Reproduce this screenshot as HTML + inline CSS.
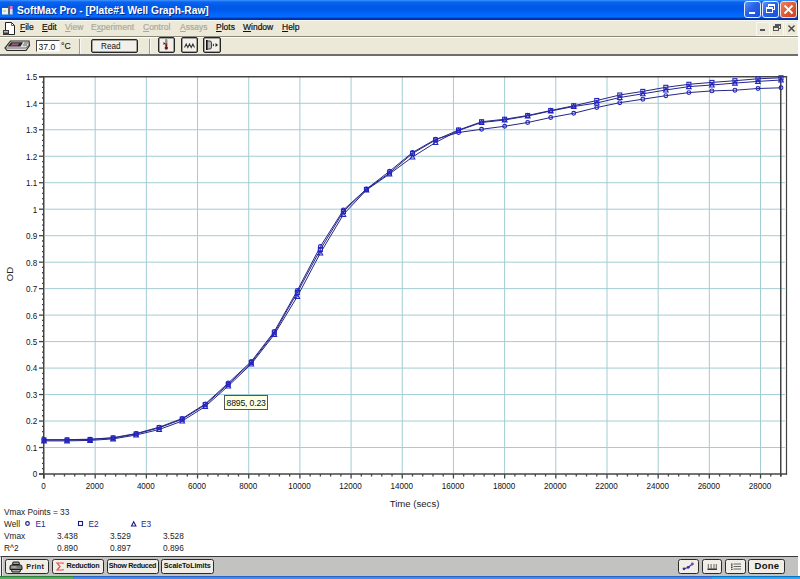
<!DOCTYPE html>
<html><head><meta charset="utf-8">
<style>
*{margin:0;padding:0;box-sizing:border-box}
html,body{width:800px;height:579px;overflow:hidden;background:#fff;font-family:"Liberation Sans",sans-serif}
.abs{position:absolute}
#title{left:0;top:0;width:798px;height:20px;background:linear-gradient(#3d95ff 0px,#0a64f0 2px,#005ae8 6px,#0058e6 9px,#0064fa 13px,#0a6aff 17px,#0040c0 18px,#0030a0 19px,#0030a0 20px)}
#title .t{left:17px;top:4.5px;font-weight:bold;font-size:10.2px;color:#fff;text-shadow:1px 1px 0 #0a2a8a;white-space:nowrap;letter-spacing:0}
#menu{left:0;top:20px;width:798px;height:17px;background:#ece9d8;border-top:1px solid #fafaf4;border-bottom:1px solid #8a887a}
#menu span{position:absolute;top:1px;font-size:8.5px;color:#111;white-space:nowrap;text-underline-offset:0.5px;-webkit-text-stroke:0.2px #111}
#menu span.d{-webkit-text-stroke:0.2px #aca899}
#menu span.d{color:#aca899}
#tool{left:0;top:37px;width:798px;height:19px;background:#ece9d8;border-top:1px solid #fff;border-bottom:2px solid #6e6e6a}
.btn{position:absolute;border:1px solid #262626;border-radius:2px;background:#f2f0e8;box-shadow:inset 0 0 0 0.5px #555}
#bottom{left:0;top:556px;width:798px;height:20px;background:#c2c2c0;border-top:1px solid #3a3a3a;border-left:1px solid #f0f0f0}
#bottom .b{position:absolute;top:2px;height:15px;border:1.5px solid #2a2a2a;border-radius:2.5px;background:#f0eee6;font-weight:bold;font-size:6.8px;color:#111;white-space:nowrap}
#task{left:0;top:576px;width:800px;height:3px;background:linear-gradient(#2a60c0 0,#2a60c0 1px,#3c8ce8 1px)}
.leg{position:absolute;font-size:8.3px;color:#222;white-space:nowrap}
</style></head>
<body>
<div id="title" class="abs">
  <svg class="abs" style="left:0;top:0" width="16" height="20">
    <rect x="2" y="8" width="6.5" height="6.5" fill="#eef4f0"/>
    <rect x="3" y="10" width="3" height="2" fill="#c8dcb0"/>
    <rect x="8" y="5.5" width="1.7" height="9" fill="#56666c"/>
    <rect x="10" y="6" width="2.6" height="3" fill="#e868c8"/>
    <rect x="10" y="9" width="2.6" height="5.5" fill="#d4dce4"/>
  </svg>
  <div class="abs t">SoftMax Pro - [Plate#1 Well Graph-Raw]</div>
  <div class="abs" style="left:797px;top:0;width:1px;height:20px;background:#0a28a0"></div>
  <!-- min -->
  <div class="abs" style="left:744px;top:1px;width:17px;height:17px;border:1px solid #e0ecff;border-radius:3px;background:linear-gradient(135deg,#5a90f8,#2860e8 45%,#1850d8)"></div>
  <div class="abs" style="left:748.5px;top:12px;width:6px;height:2px;background:#fff"></div>
  <!-- max -->
  <div class="abs" style="left:762px;top:1px;width:17px;height:17px;border:1px solid #e0ecff;border-radius:3px;background:linear-gradient(135deg,#5a90f8,#2860e8 45%,#1850d8)"></div>
  <div class="abs" style="left:768px;top:4px;width:7px;height:6px;border:1px solid #fff;border-top-width:2px"></div>
  <div class="abs" style="left:766px;top:7px;width:7px;height:6px;border:1px solid #fff;border-top-width:2px;background:#2458d8"></div>
  <!-- close -->
  <div class="abs" style="left:780px;top:1px;width:17px;height:17px;border:1px solid #f0e0e0;border-radius:3px;background:linear-gradient(135deg,#f08060,#e05a34 50%,#c84424)"></div>
  <svg class="abs" style="left:780px;top:1px" width="17" height="17"><path d="M4.5,4.5 L12.5,12.5 M12.5,4.5 L4.5,12.5" stroke="#fff" stroke-width="1.8"/></svg>
</div>

<div id="menu" class="abs">
  <svg class="abs" style="left:2px;top:0px" width="14" height="16" viewBox="0 0 14 16">
    <path d="M3.5,1.5 L9.5,1.5 L12.5,4.5 L12.5,13.5 L3.5,13.5 Z" fill="#fff" stroke="#222" stroke-width="1"/>
    <path d="M9.5,1.5 L9.5,4.5 L12.5,4.5" fill="none" stroke="#444" stroke-width="0.8"/>
    <rect x="1" y="9" width="6" height="5" fill="#3a3a3a"/>
    <rect x="2" y="10" width="4" height="1.5" fill="#bbb"/>
  </svg>
  <span style="left:20px"><u>F</u>ile</span>
  <span style="left:42px"><u>E</u>dit</span>
  <span class="d" style="left:65px"><u>V</u>iew</span>
  <span class="d" style="left:91px">E<u>x</u>periment</span>
  <span class="d" style="left:143px"><u>C</u>ontrol</span>
  <span class="d" style="left:180px"><u>A</u>ssays</span>
  <span style="left:216px"><u>P</u>lots</span>
  <span style="left:243px"><u>W</u>indow</span>
  <span style="left:282px"><u>H</u>elp</span>
  <div class="abs" style="left:756px;top:1px;width:14px;height:14px;border:1px solid #f8f8f2"></div><div class="abs" style="left:771px;top:1px;width:13px;height:14px;border:1px solid #f8f8f2"></div><div class="abs" style="left:785px;top:1px;width:13px;height:14px;border:1px solid #f8f8f2"></div>
  <div class="abs" style="left:760px;top:8px;width:5px;height:2px;background:#555"></div>
  <div class="abs" style="left:775px;top:3px;width:6px;height:5px;border:1px solid #555;border-top-width:2px"></div>
  <div class="abs" style="left:773px;top:5px;width:6px;height:5px;border:1px solid #555;border-top-width:2px;background:#ece9d8"></div>
  <svg class="abs" style="left:787px;top:2.7px" width="9" height="9"><path d="M1.5,1.5 L7.5,7.5 M7.5,1.5 L1.5,7.5" stroke="#444" stroke-width="1.4"/></svg>
</div>

<div id="tool" class="abs">
  <svg class="abs" style="left:4px;top:2px" width="27" height="12" viewBox="0 0 27 12">
    <path d="M6.5,1 L25,1 L25.5,5.5 L22,10.5 L3,10.5 L1,8 Z" fill="#dcdcdc" stroke="#2a2a2a" stroke-width="1.2"/>
    <path d="M1.5,8 L22,8 L25.5,4" fill="none" stroke="#555" stroke-width="0.8"/>
    <path d="M7,2.2 L19,2.2 L16.5,6.5 L3.5,6.5 Z" fill="#2a2a2a"/>
    <path d="M8.5,3.2 L15.5,3.2 L13.5,5.5 L6.5,5.5 Z" fill="#a85078"/>
    <rect x="20" y="2.5" width="4" height="1" fill="#666"/><rect x="19" y="4.5" width="4" height="1" fill="#666"/>
  </svg>
  <div class="abs" style="left:36px;top:2px;width:24px;height:12px;background:#fff;border-top:1px solid #444;border-left:1px solid #444;border-right:1px solid #f4f4f0;border-bottom:1px solid #f4f4f0"></div>
  <div class="abs" style="left:38.6px;top:4px;font-size:8.6px;color:#111">37.0</div>
  <div class="abs" style="left:61px;top:2.6px;font-size:8.6px;color:#111;-webkit-text-stroke:0.1px #111">°C</div>
  <div class="abs" style="left:79px;top:1px;width:1px;height:15px;background:#a09e8c"></div>
  <div class="abs" style="left:80px;top:1px;width:1px;height:15px;background:#f8f8f4"></div>
  <div class="btn" style="left:91px;top:1px;width:47px;height:14px"></div>
  <div class="abs" style="left:101px;top:4px;font-size:8.2px;color:#111">Read</div>
  <div class="abs" style="left:149px;top:1px;width:1px;height:15px;background:#a09e8c"></div>
  <div class="abs" style="left:150px;top:1px;width:1px;height:15px;background:#f8f8f4"></div>
  <div class="btn" style="left:158px;top:-1px;width:17px;height:16px"></div>
  <svg class="abs" style="left:158px;top:-1px" width="17" height="16"><path d="M7.6,2.5 L9,2.5 L9.2,9 L7.4,9 Z" fill="#a0a0a0" stroke="#666" stroke-width="0.5"/><circle cx="8.3" cy="11" r="1.7" fill="#701818"/><rect x="7.6" y="6.5" width="1.4" height="4" fill="#701818"/><path d="M5.5,5 L7.5,6.5 L5.5,8 Z" fill="#222"/></svg>
  <div class="btn" style="left:181px;top:-1px;width:17px;height:16px"></div>
  <svg class="abs" style="left:181px;top:-1px" width="17" height="16"><path d="M3.5,10.5 L5.2,7 L6.8,10.5 L8.5,7 L10.2,10.5 L11.9,7 L13.5,10.5" fill="none" stroke="#3a3a3a" stroke-width="1.1"/></svg>
  <div class="btn" style="left:203px;top:-1px;width:18px;height:16px"></div>
  <svg class="abs" style="left:203px;top:-1px" width="18" height="16"><rect x="3" y="3" width="1.8" height="10" fill="#111"/><path d="M4.8,4 L7,4 Q8.5,4 8.5,6 L8.5,10 Q8.5,12 7,12 L4.8,12" fill="#bbb" stroke="#333" stroke-width="0.9"/><path d="M9.5,8 L11,6.5 L11,9.5 Z M15,8 L12.5,6 L12.5,10 Z" fill="#222"/></svg>
</div>

<svg class="abs" style="left:0;top:0" width="800" height="579">
<line x1="95.18" y1="77" x2="95.18" y2="473" stroke="#a2ccd4" stroke-width="1"/>
<line x1="146.36" y1="77" x2="146.36" y2="473" stroke="#a2ccd4" stroke-width="1"/>
<line x1="197.54" y1="77" x2="197.54" y2="473" stroke="#a2ccd4" stroke-width="1"/>
<line x1="248.72" y1="77" x2="248.72" y2="473" stroke="#a2ccd4" stroke-width="1"/>
<line x1="299.90" y1="77" x2="299.90" y2="473" stroke="#a2ccd4" stroke-width="1"/>
<line x1="351.08" y1="77" x2="351.08" y2="473" stroke="#a2ccd4" stroke-width="1"/>
<line x1="402.26" y1="77" x2="402.26" y2="473" stroke="#a2ccd4" stroke-width="1"/>
<line x1="453.44" y1="77" x2="453.44" y2="473" stroke="#a2ccd4" stroke-width="1"/>
<line x1="504.62" y1="77" x2="504.62" y2="473" stroke="#a2ccd4" stroke-width="1"/>
<line x1="555.81" y1="77" x2="555.81" y2="473" stroke="#a2ccd4" stroke-width="1"/>
<line x1="606.99" y1="77" x2="606.99" y2="473" stroke="#a2ccd4" stroke-width="1"/>
<line x1="658.17" y1="77" x2="658.17" y2="473" stroke="#a2ccd4" stroke-width="1"/>
<line x1="709.35" y1="77" x2="709.35" y2="473" stroke="#a2ccd4" stroke-width="1"/>
<line x1="760.53" y1="77" x2="760.53" y2="473" stroke="#a2ccd4" stroke-width="1"/>
<line x1="45" y1="447.52" x2="785" y2="447.52" stroke="#a2ccd4" stroke-width="1"/>
<line x1="45" y1="421.04" x2="785" y2="421.04" stroke="#a2ccd4" stroke-width="1"/>
<line x1="45" y1="394.56" x2="785" y2="394.56" stroke="#a2ccd4" stroke-width="1"/>
<line x1="45" y1="368.08" x2="785" y2="368.08" stroke="#a2ccd4" stroke-width="1"/>
<line x1="45" y1="341.60" x2="785" y2="341.60" stroke="#a2ccd4" stroke-width="1"/>
<line x1="45" y1="315.12" x2="785" y2="315.12" stroke="#a2ccd4" stroke-width="1"/>
<line x1="45" y1="288.64" x2="785" y2="288.64" stroke="#a2ccd4" stroke-width="1"/>
<line x1="45" y1="262.16" x2="785" y2="262.16" stroke="#a2ccd4" stroke-width="1"/>
<line x1="45" y1="235.68" x2="785" y2="235.68" stroke="#a2ccd4" stroke-width="1"/>
<line x1="45" y1="209.20" x2="785" y2="209.20" stroke="#a2ccd4" stroke-width="1"/>
<line x1="45" y1="182.72" x2="785" y2="182.72" stroke="#a2ccd4" stroke-width="1"/>
<line x1="45" y1="156.24" x2="785" y2="156.24" stroke="#a2ccd4" stroke-width="1"/>
<line x1="45" y1="129.76" x2="785" y2="129.76" stroke="#a2ccd4" stroke-width="1"/>
<line x1="45" y1="103.28" x2="785" y2="103.28" stroke="#a2ccd4" stroke-width="1"/>
<line x1="39" y1="76.75" x2="787.1" y2="76.75" stroke="#444" stroke-width="1.5"/>
<line x1="786.5" y1="76" x2="786.5" y2="474.5" stroke="#444" stroke-width="1.2"/>
<line x1="39" y1="474" x2="787.1" y2="474" stroke="#444" stroke-width="1.5"/>
<line x1="43.75" y1="76" x2="43.75" y2="478.5" stroke="#444" stroke-width="1.5"/>
<line x1="780.75" y1="76" x2="780.75" y2="476.5" stroke="#444" stroke-width="1.5"/>
<line x1="39" y1="474.00" x2="44" y2="474.00" stroke="#444" stroke-width="1.3"/>
<line x1="42" y1="468.70" x2="44" y2="468.70" stroke="#444" stroke-width="1.3"/>
<line x1="42" y1="463.41" x2="44" y2="463.41" stroke="#444" stroke-width="1.3"/>
<line x1="42" y1="458.11" x2="44" y2="458.11" stroke="#444" stroke-width="1.3"/>
<line x1="42" y1="452.82" x2="44" y2="452.82" stroke="#444" stroke-width="1.3"/>
<line x1="39" y1="447.52" x2="44" y2="447.52" stroke="#444" stroke-width="1.3"/>
<line x1="42" y1="442.22" x2="44" y2="442.22" stroke="#444" stroke-width="1.3"/>
<line x1="42" y1="436.93" x2="44" y2="436.93" stroke="#444" stroke-width="1.3"/>
<line x1="42" y1="431.63" x2="44" y2="431.63" stroke="#444" stroke-width="1.3"/>
<line x1="42" y1="426.34" x2="44" y2="426.34" stroke="#444" stroke-width="1.3"/>
<line x1="39" y1="421.04" x2="44" y2="421.04" stroke="#444" stroke-width="1.3"/>
<line x1="42" y1="415.74" x2="44" y2="415.74" stroke="#444" stroke-width="1.3"/>
<line x1="42" y1="410.45" x2="44" y2="410.45" stroke="#444" stroke-width="1.3"/>
<line x1="42" y1="405.15" x2="44" y2="405.15" stroke="#444" stroke-width="1.3"/>
<line x1="42" y1="399.86" x2="44" y2="399.86" stroke="#444" stroke-width="1.3"/>
<line x1="39" y1="394.56" x2="44" y2="394.56" stroke="#444" stroke-width="1.3"/>
<line x1="42" y1="389.26" x2="44" y2="389.26" stroke="#444" stroke-width="1.3"/>
<line x1="42" y1="383.97" x2="44" y2="383.97" stroke="#444" stroke-width="1.3"/>
<line x1="42" y1="378.67" x2="44" y2="378.67" stroke="#444" stroke-width="1.3"/>
<line x1="42" y1="373.38" x2="44" y2="373.38" stroke="#444" stroke-width="1.3"/>
<line x1="39" y1="368.08" x2="44" y2="368.08" stroke="#444" stroke-width="1.3"/>
<line x1="42" y1="362.78" x2="44" y2="362.78" stroke="#444" stroke-width="1.3"/>
<line x1="42" y1="357.49" x2="44" y2="357.49" stroke="#444" stroke-width="1.3"/>
<line x1="42" y1="352.19" x2="44" y2="352.19" stroke="#444" stroke-width="1.3"/>
<line x1="42" y1="346.90" x2="44" y2="346.90" stroke="#444" stroke-width="1.3"/>
<line x1="39" y1="341.60" x2="44" y2="341.60" stroke="#444" stroke-width="1.3"/>
<line x1="42" y1="336.30" x2="44" y2="336.30" stroke="#444" stroke-width="1.3"/>
<line x1="42" y1="331.01" x2="44" y2="331.01" stroke="#444" stroke-width="1.3"/>
<line x1="42" y1="325.71" x2="44" y2="325.71" stroke="#444" stroke-width="1.3"/>
<line x1="42" y1="320.42" x2="44" y2="320.42" stroke="#444" stroke-width="1.3"/>
<line x1="39" y1="315.12" x2="44" y2="315.12" stroke="#444" stroke-width="1.3"/>
<line x1="42" y1="309.82" x2="44" y2="309.82" stroke="#444" stroke-width="1.3"/>
<line x1="42" y1="304.53" x2="44" y2="304.53" stroke="#444" stroke-width="1.3"/>
<line x1="42" y1="299.23" x2="44" y2="299.23" stroke="#444" stroke-width="1.3"/>
<line x1="42" y1="293.94" x2="44" y2="293.94" stroke="#444" stroke-width="1.3"/>
<line x1="39" y1="288.64" x2="44" y2="288.64" stroke="#444" stroke-width="1.3"/>
<line x1="42" y1="283.34" x2="44" y2="283.34" stroke="#444" stroke-width="1.3"/>
<line x1="42" y1="278.05" x2="44" y2="278.05" stroke="#444" stroke-width="1.3"/>
<line x1="42" y1="272.75" x2="44" y2="272.75" stroke="#444" stroke-width="1.3"/>
<line x1="42" y1="267.46" x2="44" y2="267.46" stroke="#444" stroke-width="1.3"/>
<line x1="39" y1="262.16" x2="44" y2="262.16" stroke="#444" stroke-width="1.3"/>
<line x1="42" y1="256.86" x2="44" y2="256.86" stroke="#444" stroke-width="1.3"/>
<line x1="42" y1="251.57" x2="44" y2="251.57" stroke="#444" stroke-width="1.3"/>
<line x1="42" y1="246.27" x2="44" y2="246.27" stroke="#444" stroke-width="1.3"/>
<line x1="42" y1="240.98" x2="44" y2="240.98" stroke="#444" stroke-width="1.3"/>
<line x1="39" y1="235.68" x2="44" y2="235.68" stroke="#444" stroke-width="1.3"/>
<line x1="42" y1="230.38" x2="44" y2="230.38" stroke="#444" stroke-width="1.3"/>
<line x1="42" y1="225.09" x2="44" y2="225.09" stroke="#444" stroke-width="1.3"/>
<line x1="42" y1="219.79" x2="44" y2="219.79" stroke="#444" stroke-width="1.3"/>
<line x1="42" y1="214.50" x2="44" y2="214.50" stroke="#444" stroke-width="1.3"/>
<line x1="39" y1="209.20" x2="44" y2="209.20" stroke="#444" stroke-width="1.3"/>
<line x1="42" y1="203.90" x2="44" y2="203.90" stroke="#444" stroke-width="1.3"/>
<line x1="42" y1="198.61" x2="44" y2="198.61" stroke="#444" stroke-width="1.3"/>
<line x1="42" y1="193.31" x2="44" y2="193.31" stroke="#444" stroke-width="1.3"/>
<line x1="42" y1="188.02" x2="44" y2="188.02" stroke="#444" stroke-width="1.3"/>
<line x1="39" y1="182.72" x2="44" y2="182.72" stroke="#444" stroke-width="1.3"/>
<line x1="42" y1="177.42" x2="44" y2="177.42" stroke="#444" stroke-width="1.3"/>
<line x1="42" y1="172.13" x2="44" y2="172.13" stroke="#444" stroke-width="1.3"/>
<line x1="42" y1="166.83" x2="44" y2="166.83" stroke="#444" stroke-width="1.3"/>
<line x1="42" y1="161.54" x2="44" y2="161.54" stroke="#444" stroke-width="1.3"/>
<line x1="39" y1="156.24" x2="44" y2="156.24" stroke="#444" stroke-width="1.3"/>
<line x1="42" y1="150.94" x2="44" y2="150.94" stroke="#444" stroke-width="1.3"/>
<line x1="42" y1="145.65" x2="44" y2="145.65" stroke="#444" stroke-width="1.3"/>
<line x1="42" y1="140.35" x2="44" y2="140.35" stroke="#444" stroke-width="1.3"/>
<line x1="42" y1="135.06" x2="44" y2="135.06" stroke="#444" stroke-width="1.3"/>
<line x1="39" y1="129.76" x2="44" y2="129.76" stroke="#444" stroke-width="1.3"/>
<line x1="42" y1="124.46" x2="44" y2="124.46" stroke="#444" stroke-width="1.3"/>
<line x1="42" y1="119.17" x2="44" y2="119.17" stroke="#444" stroke-width="1.3"/>
<line x1="42" y1="113.87" x2="44" y2="113.87" stroke="#444" stroke-width="1.3"/>
<line x1="42" y1="108.58" x2="44" y2="108.58" stroke="#444" stroke-width="1.3"/>
<line x1="39" y1="103.28" x2="44" y2="103.28" stroke="#444" stroke-width="1.3"/>
<line x1="42" y1="97.98" x2="44" y2="97.98" stroke="#444" stroke-width="1.3"/>
<line x1="42" y1="92.69" x2="44" y2="92.69" stroke="#444" stroke-width="1.3"/>
<line x1="42" y1="87.39" x2="44" y2="87.39" stroke="#444" stroke-width="1.3"/>
<line x1="42" y1="82.10" x2="44" y2="82.10" stroke="#444" stroke-width="1.3"/>
<line x1="39" y1="76.80" x2="44" y2="76.80" stroke="#444" stroke-width="1.3"/>
<line x1="44.00" y1="474" x2="44.00" y2="478.5" stroke="#444" stroke-width="1.3"/>
<line x1="54.24" y1="474" x2="54.24" y2="476.5" stroke="#444" stroke-width="1.3"/>
<line x1="64.47" y1="474" x2="64.47" y2="476.5" stroke="#444" stroke-width="1.3"/>
<line x1="74.71" y1="474" x2="74.71" y2="476.5" stroke="#444" stroke-width="1.3"/>
<line x1="84.94" y1="474" x2="84.94" y2="476.5" stroke="#444" stroke-width="1.3"/>
<line x1="95.18" y1="474" x2="95.18" y2="478.5" stroke="#444" stroke-width="1.3"/>
<line x1="105.42" y1="474" x2="105.42" y2="476.5" stroke="#444" stroke-width="1.3"/>
<line x1="115.65" y1="474" x2="115.65" y2="476.5" stroke="#444" stroke-width="1.3"/>
<line x1="125.89" y1="474" x2="125.89" y2="476.5" stroke="#444" stroke-width="1.3"/>
<line x1="136.12" y1="474" x2="136.12" y2="476.5" stroke="#444" stroke-width="1.3"/>
<line x1="146.36" y1="474" x2="146.36" y2="478.5" stroke="#444" stroke-width="1.3"/>
<line x1="156.60" y1="474" x2="156.60" y2="476.5" stroke="#444" stroke-width="1.3"/>
<line x1="166.83" y1="474" x2="166.83" y2="476.5" stroke="#444" stroke-width="1.3"/>
<line x1="177.07" y1="474" x2="177.07" y2="476.5" stroke="#444" stroke-width="1.3"/>
<line x1="187.31" y1="474" x2="187.31" y2="476.5" stroke="#444" stroke-width="1.3"/>
<line x1="197.54" y1="474" x2="197.54" y2="478.5" stroke="#444" stroke-width="1.3"/>
<line x1="207.78" y1="474" x2="207.78" y2="476.5" stroke="#444" stroke-width="1.3"/>
<line x1="218.01" y1="474" x2="218.01" y2="476.5" stroke="#444" stroke-width="1.3"/>
<line x1="228.25" y1="474" x2="228.25" y2="476.5" stroke="#444" stroke-width="1.3"/>
<line x1="238.49" y1="474" x2="238.49" y2="476.5" stroke="#444" stroke-width="1.3"/>
<line x1="248.72" y1="474" x2="248.72" y2="478.5" stroke="#444" stroke-width="1.3"/>
<line x1="258.96" y1="474" x2="258.96" y2="476.5" stroke="#444" stroke-width="1.3"/>
<line x1="269.19" y1="474" x2="269.19" y2="476.5" stroke="#444" stroke-width="1.3"/>
<line x1="279.43" y1="474" x2="279.43" y2="476.5" stroke="#444" stroke-width="1.3"/>
<line x1="289.67" y1="474" x2="289.67" y2="476.5" stroke="#444" stroke-width="1.3"/>
<line x1="299.90" y1="474" x2="299.90" y2="478.5" stroke="#444" stroke-width="1.3"/>
<line x1="310.14" y1="474" x2="310.14" y2="476.5" stroke="#444" stroke-width="1.3"/>
<line x1="320.38" y1="474" x2="320.38" y2="476.5" stroke="#444" stroke-width="1.3"/>
<line x1="330.61" y1="474" x2="330.61" y2="476.5" stroke="#444" stroke-width="1.3"/>
<line x1="340.85" y1="474" x2="340.85" y2="476.5" stroke="#444" stroke-width="1.3"/>
<line x1="351.08" y1="474" x2="351.08" y2="478.5" stroke="#444" stroke-width="1.3"/>
<line x1="361.32" y1="474" x2="361.32" y2="476.5" stroke="#444" stroke-width="1.3"/>
<line x1="371.56" y1="474" x2="371.56" y2="476.5" stroke="#444" stroke-width="1.3"/>
<line x1="381.79" y1="474" x2="381.79" y2="476.5" stroke="#444" stroke-width="1.3"/>
<line x1="392.03" y1="474" x2="392.03" y2="476.5" stroke="#444" stroke-width="1.3"/>
<line x1="402.26" y1="474" x2="402.26" y2="478.5" stroke="#444" stroke-width="1.3"/>
<line x1="412.50" y1="474" x2="412.50" y2="476.5" stroke="#444" stroke-width="1.3"/>
<line x1="422.74" y1="474" x2="422.74" y2="476.5" stroke="#444" stroke-width="1.3"/>
<line x1="432.97" y1="474" x2="432.97" y2="476.5" stroke="#444" stroke-width="1.3"/>
<line x1="443.21" y1="474" x2="443.21" y2="476.5" stroke="#444" stroke-width="1.3"/>
<line x1="453.44" y1="474" x2="453.44" y2="478.5" stroke="#444" stroke-width="1.3"/>
<line x1="463.68" y1="474" x2="463.68" y2="476.5" stroke="#444" stroke-width="1.3"/>
<line x1="473.92" y1="474" x2="473.92" y2="476.5" stroke="#444" stroke-width="1.3"/>
<line x1="484.15" y1="474" x2="484.15" y2="476.5" stroke="#444" stroke-width="1.3"/>
<line x1="494.39" y1="474" x2="494.39" y2="476.5" stroke="#444" stroke-width="1.3"/>
<line x1="504.62" y1="474" x2="504.62" y2="478.5" stroke="#444" stroke-width="1.3"/>
<line x1="514.86" y1="474" x2="514.86" y2="476.5" stroke="#444" stroke-width="1.3"/>
<line x1="525.10" y1="474" x2="525.10" y2="476.5" stroke="#444" stroke-width="1.3"/>
<line x1="535.33" y1="474" x2="535.33" y2="476.5" stroke="#444" stroke-width="1.3"/>
<line x1="545.57" y1="474" x2="545.57" y2="476.5" stroke="#444" stroke-width="1.3"/>
<line x1="555.81" y1="474" x2="555.81" y2="478.5" stroke="#444" stroke-width="1.3"/>
<line x1="566.04" y1="474" x2="566.04" y2="476.5" stroke="#444" stroke-width="1.3"/>
<line x1="576.28" y1="474" x2="576.28" y2="476.5" stroke="#444" stroke-width="1.3"/>
<line x1="586.51" y1="474" x2="586.51" y2="476.5" stroke="#444" stroke-width="1.3"/>
<line x1="596.75" y1="474" x2="596.75" y2="476.5" stroke="#444" stroke-width="1.3"/>
<line x1="606.99" y1="474" x2="606.99" y2="478.5" stroke="#444" stroke-width="1.3"/>
<line x1="617.22" y1="474" x2="617.22" y2="476.5" stroke="#444" stroke-width="1.3"/>
<line x1="627.46" y1="474" x2="627.46" y2="476.5" stroke="#444" stroke-width="1.3"/>
<line x1="637.69" y1="474" x2="637.69" y2="476.5" stroke="#444" stroke-width="1.3"/>
<line x1="647.93" y1="474" x2="647.93" y2="476.5" stroke="#444" stroke-width="1.3"/>
<line x1="658.17" y1="474" x2="658.17" y2="478.5" stroke="#444" stroke-width="1.3"/>
<line x1="668.40" y1="474" x2="668.40" y2="476.5" stroke="#444" stroke-width="1.3"/>
<line x1="678.64" y1="474" x2="678.64" y2="476.5" stroke="#444" stroke-width="1.3"/>
<line x1="688.88" y1="474" x2="688.88" y2="476.5" stroke="#444" stroke-width="1.3"/>
<line x1="699.11" y1="474" x2="699.11" y2="476.5" stroke="#444" stroke-width="1.3"/>
<line x1="709.35" y1="474" x2="709.35" y2="478.5" stroke="#444" stroke-width="1.3"/>
<line x1="719.58" y1="474" x2="719.58" y2="476.5" stroke="#444" stroke-width="1.3"/>
<line x1="729.82" y1="474" x2="729.82" y2="476.5" stroke="#444" stroke-width="1.3"/>
<line x1="740.06" y1="474" x2="740.06" y2="476.5" stroke="#444" stroke-width="1.3"/>
<line x1="750.29" y1="474" x2="750.29" y2="476.5" stroke="#444" stroke-width="1.3"/>
<line x1="760.53" y1="474" x2="760.53" y2="478.5" stroke="#444" stroke-width="1.3"/>
<line x1="770.76" y1="474" x2="770.76" y2="476.5" stroke="#444" stroke-width="1.3"/>
<line x1="781.00" y1="474" x2="781.00" y2="476.5" stroke="#444" stroke-width="1.3"/>
<text transform="translate(37.2,477.40) scale(0.86,1)" text-anchor="end" font-family="Liberation Sans" font-size="9.4" fill="#111">0</text>
<text transform="translate(37.2,450.92) scale(0.86,1)" text-anchor="end" font-family="Liberation Sans" font-size="9.4" fill="#111">0.1</text>
<text transform="translate(37.2,424.44) scale(0.86,1)" text-anchor="end" font-family="Liberation Sans" font-size="9.4" fill="#111">0.2</text>
<text transform="translate(37.2,397.96) scale(0.86,1)" text-anchor="end" font-family="Liberation Sans" font-size="9.4" fill="#111">0.3</text>
<text transform="translate(37.2,371.48) scale(0.86,1)" text-anchor="end" font-family="Liberation Sans" font-size="9.4" fill="#111">0.4</text>
<text transform="translate(37.2,345.00) scale(0.86,1)" text-anchor="end" font-family="Liberation Sans" font-size="9.4" fill="#111">0.5</text>
<text transform="translate(37.2,318.52) scale(0.86,1)" text-anchor="end" font-family="Liberation Sans" font-size="9.4" fill="#111">0.6</text>
<text transform="translate(37.2,292.04) scale(0.86,1)" text-anchor="end" font-family="Liberation Sans" font-size="9.4" fill="#111">0.7</text>
<text transform="translate(37.2,265.56) scale(0.86,1)" text-anchor="end" font-family="Liberation Sans" font-size="9.4" fill="#111">0.8</text>
<text transform="translate(37.2,239.08) scale(0.86,1)" text-anchor="end" font-family="Liberation Sans" font-size="9.4" fill="#111">0.9</text>
<text transform="translate(37.2,212.60) scale(0.86,1)" text-anchor="end" font-family="Liberation Sans" font-size="9.4" fill="#111">1</text>
<text transform="translate(37.2,186.12) scale(0.86,1)" text-anchor="end" font-family="Liberation Sans" font-size="9.4" fill="#111">1.1</text>
<text transform="translate(37.2,159.64) scale(0.86,1)" text-anchor="end" font-family="Liberation Sans" font-size="9.4" fill="#111">1.2</text>
<text transform="translate(37.2,133.16) scale(0.86,1)" text-anchor="end" font-family="Liberation Sans" font-size="9.4" fill="#111">1.3</text>
<text transform="translate(37.2,106.68) scale(0.86,1)" text-anchor="end" font-family="Liberation Sans" font-size="9.4" fill="#111">1.4</text>
<text transform="translate(37.2,80.20) scale(0.86,1)" text-anchor="end" font-family="Liberation Sans" font-size="9.4" fill="#111">1.5</text>
<text transform="translate(43.50,488.8) scale(0.86,1)" text-anchor="middle" font-family="Liberation Sans" font-size="9.4" fill="#111">0</text>
<text transform="translate(94.68,488.8) scale(0.86,1)" text-anchor="middle" font-family="Liberation Sans" font-size="9.4" fill="#111">2000</text>
<text transform="translate(145.86,488.8) scale(0.86,1)" text-anchor="middle" font-family="Liberation Sans" font-size="9.4" fill="#111">4000</text>
<text transform="translate(197.04,488.8) scale(0.86,1)" text-anchor="middle" font-family="Liberation Sans" font-size="9.4" fill="#111">6000</text>
<text transform="translate(248.22,488.8) scale(0.86,1)" text-anchor="middle" font-family="Liberation Sans" font-size="9.4" fill="#111">8000</text>
<text transform="translate(299.40,488.8) scale(0.86,1)" text-anchor="middle" font-family="Liberation Sans" font-size="9.4" fill="#111">10000</text>
<text transform="translate(350.58,488.8) scale(0.86,1)" text-anchor="middle" font-family="Liberation Sans" font-size="9.4" fill="#111">12000</text>
<text transform="translate(401.76,488.8) scale(0.86,1)" text-anchor="middle" font-family="Liberation Sans" font-size="9.4" fill="#111">14000</text>
<text transform="translate(452.94,488.8) scale(0.86,1)" text-anchor="middle" font-family="Liberation Sans" font-size="9.4" fill="#111">16000</text>
<text transform="translate(504.12,488.8) scale(0.86,1)" text-anchor="middle" font-family="Liberation Sans" font-size="9.4" fill="#111">18000</text>
<text transform="translate(555.31,488.8) scale(0.86,1)" text-anchor="middle" font-family="Liberation Sans" font-size="9.4" fill="#111">20000</text>
<text transform="translate(606.49,488.8) scale(0.86,1)" text-anchor="middle" font-family="Liberation Sans" font-size="9.4" fill="#111">22000</text>
<text transform="translate(657.67,488.8) scale(0.86,1)" text-anchor="middle" font-family="Liberation Sans" font-size="9.4" fill="#111">24000</text>
<text transform="translate(708.85,488.8) scale(0.86,1)" text-anchor="middle" font-family="Liberation Sans" font-size="9.4" fill="#111">26000</text>
<text transform="translate(760.03,488.8) scale(0.86,1)" text-anchor="middle" font-family="Liberation Sans" font-size="9.4" fill="#111">28000</text>
<text x="414.5" y="507" text-anchor="middle" font-family="Liberation Sans" font-size="9.6" fill="#222">Time (secs)</text>
<text transform="translate(13.4,274) rotate(-90)" text-anchor="middle" font-family="Liberation Sans" font-size="9.6" fill="#222">OD</text>
<polyline points="44.00,439.70 67.03,439.70 90.06,439.20 113.09,437.70 136.12,433.50 159.16,427.20 182.19,418.50 205.22,404.00 228.25,383.00 251.28,361.50 274.31,331.50 297.34,290.50 320.38,246.50 343.41,210.00 366.44,189.00 389.47,171.30 412.50,152.50 435.53,139.30 458.56,132.50 481.59,129.25 504.62,126.25 527.66,122.50 550.69,117.50 573.72,113.25 596.75,107.50 619.78,102.70 642.81,99.20 665.84,95.70 688.88,92.60 711.91,90.90 734.94,90.20 757.97,88.50 781.00,87.80" fill="none" stroke="#262688" stroke-width="1"/>
<polyline points="44.00,440.00 67.03,440.00 90.06,439.50 113.09,438.00 136.12,434.00 159.16,427.80 182.19,419.20 205.22,404.80 228.25,384.40 251.28,362.60 274.31,332.90 297.34,292.50 320.38,249.50 343.41,211.50 366.44,189.40 389.47,173.00 412.50,153.50 435.53,140.00 458.56,130.00 481.59,121.75 504.62,119.25 527.66,115.50 550.69,110.50 573.72,105.75 596.75,100.50 619.78,95.00 642.81,91.40 665.84,87.30 688.88,84.30 711.91,82.40 734.94,80.70 757.97,78.80 781.00,77.80" fill="none" stroke="#262688" stroke-width="1"/>
<polyline points="44.00,440.90 67.03,440.90 90.06,440.40 113.09,438.90 136.12,435.00 159.16,429.50 182.19,421.00 205.22,406.50 228.25,386.00 251.28,364.00 274.31,334.50 297.34,296.50 320.38,253.00 343.41,214.50 366.44,190.00 389.47,174.00 412.50,157.00 435.53,142.50 458.56,130.50 481.59,122.50 504.62,120.00 527.66,116.00 550.69,111.00 573.72,106.50 596.75,103.00 619.78,97.50 642.81,93.80 665.84,90.00 688.88,86.60 711.91,85.00 734.94,83.10 757.97,81.40 781.00,80.00" fill="none" stroke="#262688" stroke-width="1"/>
<circle cx="44.00" cy="439.70" r="1.9" fill="none" stroke="#2424c0" stroke-width="1.1"/>
<circle cx="67.03" cy="439.70" r="1.9" fill="none" stroke="#2424c0" stroke-width="1.1"/>
<circle cx="90.06" cy="439.20" r="1.9" fill="none" stroke="#2424c0" stroke-width="1.1"/>
<circle cx="113.09" cy="437.70" r="1.9" fill="none" stroke="#2424c0" stroke-width="1.1"/>
<circle cx="136.12" cy="433.50" r="1.9" fill="none" stroke="#2424c0" stroke-width="1.1"/>
<circle cx="159.16" cy="427.20" r="1.9" fill="none" stroke="#2424c0" stroke-width="1.1"/>
<circle cx="182.19" cy="418.50" r="1.9" fill="none" stroke="#2424c0" stroke-width="1.1"/>
<circle cx="205.22" cy="404.00" r="1.9" fill="none" stroke="#2424c0" stroke-width="1.1"/>
<circle cx="228.25" cy="383.00" r="1.9" fill="none" stroke="#2424c0" stroke-width="1.1"/>
<circle cx="251.28" cy="361.50" r="1.9" fill="none" stroke="#2424c0" stroke-width="1.1"/>
<circle cx="274.31" cy="331.50" r="1.9" fill="none" stroke="#2424c0" stroke-width="1.1"/>
<circle cx="297.34" cy="290.50" r="1.9" fill="none" stroke="#2424c0" stroke-width="1.1"/>
<circle cx="320.38" cy="246.50" r="1.9" fill="none" stroke="#2424c0" stroke-width="1.1"/>
<circle cx="343.41" cy="210.00" r="1.9" fill="none" stroke="#2424c0" stroke-width="1.1"/>
<circle cx="366.44" cy="189.00" r="1.9" fill="none" stroke="#2424c0" stroke-width="1.1"/>
<circle cx="389.47" cy="171.30" r="1.9" fill="none" stroke="#2424c0" stroke-width="1.1"/>
<circle cx="412.50" cy="152.50" r="1.9" fill="none" stroke="#2424c0" stroke-width="1.1"/>
<circle cx="435.53" cy="139.30" r="1.9" fill="none" stroke="#2424c0" stroke-width="1.1"/>
<circle cx="458.56" cy="132.50" r="1.9" fill="none" stroke="#2424c0" stroke-width="1.1"/>
<circle cx="481.59" cy="129.25" r="1.9" fill="none" stroke="#2424c0" stroke-width="1.1"/>
<circle cx="504.62" cy="126.25" r="1.9" fill="none" stroke="#2424c0" stroke-width="1.1"/>
<circle cx="527.66" cy="122.50" r="1.9" fill="none" stroke="#2424c0" stroke-width="1.1"/>
<circle cx="550.69" cy="117.50" r="1.9" fill="none" stroke="#2424c0" stroke-width="1.1"/>
<circle cx="573.72" cy="113.25" r="1.9" fill="none" stroke="#2424c0" stroke-width="1.1"/>
<circle cx="596.75" cy="107.50" r="1.9" fill="none" stroke="#2424c0" stroke-width="1.1"/>
<circle cx="619.78" cy="102.70" r="1.9" fill="none" stroke="#2424c0" stroke-width="1.1"/>
<circle cx="642.81" cy="99.20" r="1.9" fill="none" stroke="#2424c0" stroke-width="1.1"/>
<circle cx="665.84" cy="95.70" r="1.9" fill="none" stroke="#2424c0" stroke-width="1.1"/>
<circle cx="688.88" cy="92.60" r="1.9" fill="none" stroke="#2424c0" stroke-width="1.1"/>
<circle cx="711.91" cy="90.90" r="1.9" fill="none" stroke="#2424c0" stroke-width="1.1"/>
<circle cx="734.94" cy="90.20" r="1.9" fill="none" stroke="#2424c0" stroke-width="1.1"/>
<circle cx="757.97" cy="88.50" r="1.9" fill="none" stroke="#2424c0" stroke-width="1.1"/>
<circle cx="781.00" cy="87.80" r="1.9" fill="none" stroke="#2424c0" stroke-width="1.1"/>
<rect x="42.00" y="438.00" width="4" height="4" fill="none" stroke="#2424c0" stroke-width="1.1"/>
<rect x="65.03" y="438.00" width="4" height="4" fill="none" stroke="#2424c0" stroke-width="1.1"/>
<rect x="88.06" y="437.50" width="4" height="4" fill="none" stroke="#2424c0" stroke-width="1.1"/>
<rect x="111.09" y="436.00" width="4" height="4" fill="none" stroke="#2424c0" stroke-width="1.1"/>
<rect x="134.12" y="432.00" width="4" height="4" fill="none" stroke="#2424c0" stroke-width="1.1"/>
<rect x="157.16" y="425.80" width="4" height="4" fill="none" stroke="#2424c0" stroke-width="1.1"/>
<rect x="180.19" y="417.20" width="4" height="4" fill="none" stroke="#2424c0" stroke-width="1.1"/>
<rect x="203.22" y="402.80" width="4" height="4" fill="none" stroke="#2424c0" stroke-width="1.1"/>
<rect x="226.25" y="382.40" width="4" height="4" fill="none" stroke="#2424c0" stroke-width="1.1"/>
<rect x="249.28" y="360.60" width="4" height="4" fill="none" stroke="#2424c0" stroke-width="1.1"/>
<rect x="272.31" y="330.90" width="4" height="4" fill="none" stroke="#2424c0" stroke-width="1.1"/>
<rect x="295.34" y="290.50" width="4" height="4" fill="none" stroke="#2424c0" stroke-width="1.1"/>
<rect x="318.38" y="247.50" width="4" height="4" fill="none" stroke="#2424c0" stroke-width="1.1"/>
<rect x="341.41" y="209.50" width="4" height="4" fill="none" stroke="#2424c0" stroke-width="1.1"/>
<rect x="364.44" y="187.40" width="4" height="4" fill="none" stroke="#2424c0" stroke-width="1.1"/>
<rect x="387.47" y="171.00" width="4" height="4" fill="none" stroke="#2424c0" stroke-width="1.1"/>
<rect x="410.50" y="151.50" width="4" height="4" fill="none" stroke="#2424c0" stroke-width="1.1"/>
<rect x="433.53" y="138.00" width="4" height="4" fill="none" stroke="#2424c0" stroke-width="1.1"/>
<rect x="456.56" y="128.00" width="4" height="4" fill="none" stroke="#2424c0" stroke-width="1.1"/>
<rect x="479.59" y="119.75" width="4" height="4" fill="none" stroke="#2424c0" stroke-width="1.1"/>
<rect x="502.62" y="117.25" width="4" height="4" fill="none" stroke="#2424c0" stroke-width="1.1"/>
<rect x="525.66" y="113.50" width="4" height="4" fill="none" stroke="#2424c0" stroke-width="1.1"/>
<rect x="548.69" y="108.50" width="4" height="4" fill="none" stroke="#2424c0" stroke-width="1.1"/>
<rect x="571.72" y="103.75" width="4" height="4" fill="none" stroke="#2424c0" stroke-width="1.1"/>
<rect x="594.75" y="98.50" width="4" height="4" fill="none" stroke="#2424c0" stroke-width="1.1"/>
<rect x="617.78" y="93.00" width="4" height="4" fill="none" stroke="#2424c0" stroke-width="1.1"/>
<rect x="640.81" y="89.40" width="4" height="4" fill="none" stroke="#2424c0" stroke-width="1.1"/>
<rect x="663.84" y="85.30" width="4" height="4" fill="none" stroke="#2424c0" stroke-width="1.1"/>
<rect x="686.88" y="82.30" width="4" height="4" fill="none" stroke="#2424c0" stroke-width="1.1"/>
<rect x="709.91" y="80.40" width="4" height="4" fill="none" stroke="#2424c0" stroke-width="1.1"/>
<rect x="732.94" y="78.70" width="4" height="4" fill="none" stroke="#2424c0" stroke-width="1.1"/>
<rect x="755.97" y="76.80" width="4" height="4" fill="none" stroke="#2424c0" stroke-width="1.1"/>
<rect x="779.00" y="75.80" width="4" height="4" fill="none" stroke="#2424c0" stroke-width="1.1"/>
<path d="M44.00,438.50 L46.30,442.90 L41.70,442.90 Z" fill="none" stroke="#2424c0" stroke-width="1.1"/>
<path d="M67.03,438.50 L69.33,442.90 L64.73,442.90 Z" fill="none" stroke="#2424c0" stroke-width="1.1"/>
<path d="M90.06,438.00 L92.36,442.40 L87.76,442.40 Z" fill="none" stroke="#2424c0" stroke-width="1.1"/>
<path d="M113.09,436.50 L115.39,440.90 L110.79,440.90 Z" fill="none" stroke="#2424c0" stroke-width="1.1"/>
<path d="M136.12,432.60 L138.43,437.00 L133.82,437.00 Z" fill="none" stroke="#2424c0" stroke-width="1.1"/>
<path d="M159.16,427.10 L161.46,431.50 L156.86,431.50 Z" fill="none" stroke="#2424c0" stroke-width="1.1"/>
<path d="M182.19,418.60 L184.49,423.00 L179.89,423.00 Z" fill="none" stroke="#2424c0" stroke-width="1.1"/>
<path d="M205.22,404.10 L207.52,408.50 L202.92,408.50 Z" fill="none" stroke="#2424c0" stroke-width="1.1"/>
<path d="M228.25,383.60 L230.55,388.00 L225.95,388.00 Z" fill="none" stroke="#2424c0" stroke-width="1.1"/>
<path d="M251.28,361.60 L253.58,366.00 L248.98,366.00 Z" fill="none" stroke="#2424c0" stroke-width="1.1"/>
<path d="M274.31,332.10 L276.61,336.50 L272.01,336.50 Z" fill="none" stroke="#2424c0" stroke-width="1.1"/>
<path d="M297.34,294.10 L299.64,298.50 L295.04,298.50 Z" fill="none" stroke="#2424c0" stroke-width="1.1"/>
<path d="M320.38,250.60 L322.68,255.00 L318.07,255.00 Z" fill="none" stroke="#2424c0" stroke-width="1.1"/>
<path d="M343.41,212.10 L345.71,216.50 L341.11,216.50 Z" fill="none" stroke="#2424c0" stroke-width="1.1"/>
<path d="M366.44,187.60 L368.74,192.00 L364.14,192.00 Z" fill="none" stroke="#2424c0" stroke-width="1.1"/>
<path d="M389.47,171.60 L391.77,176.00 L387.17,176.00 Z" fill="none" stroke="#2424c0" stroke-width="1.1"/>
<path d="M412.50,154.60 L414.80,159.00 L410.20,159.00 Z" fill="none" stroke="#2424c0" stroke-width="1.1"/>
<path d="M435.53,140.10 L437.83,144.50 L433.23,144.50 Z" fill="none" stroke="#2424c0" stroke-width="1.1"/>
<path d="M458.56,128.10 L460.86,132.50 L456.26,132.50 Z" fill="none" stroke="#2424c0" stroke-width="1.1"/>
<path d="M481.59,120.10 L483.89,124.50 L479.29,124.50 Z" fill="none" stroke="#2424c0" stroke-width="1.1"/>
<path d="M504.62,117.60 L506.93,122.00 L502.32,122.00 Z" fill="none" stroke="#2424c0" stroke-width="1.1"/>
<path d="M527.66,113.60 L529.96,118.00 L525.36,118.00 Z" fill="none" stroke="#2424c0" stroke-width="1.1"/>
<path d="M550.69,108.60 L552.99,113.00 L548.39,113.00 Z" fill="none" stroke="#2424c0" stroke-width="1.1"/>
<path d="M573.72,104.10 L576.02,108.50 L571.42,108.50 Z" fill="none" stroke="#2424c0" stroke-width="1.1"/>
<path d="M596.75,100.60 L599.05,105.00 L594.45,105.00 Z" fill="none" stroke="#2424c0" stroke-width="1.1"/>
<path d="M619.78,95.10 L622.08,99.50 L617.48,99.50 Z" fill="none" stroke="#2424c0" stroke-width="1.1"/>
<path d="M642.81,91.40 L645.11,95.80 L640.51,95.80 Z" fill="none" stroke="#2424c0" stroke-width="1.1"/>
<path d="M665.84,87.60 L668.14,92.00 L663.54,92.00 Z" fill="none" stroke="#2424c0" stroke-width="1.1"/>
<path d="M688.88,84.20 L691.17,88.60 L686.58,88.60 Z" fill="none" stroke="#2424c0" stroke-width="1.1"/>
<path d="M711.91,82.60 L714.21,87.00 L709.61,87.00 Z" fill="none" stroke="#2424c0" stroke-width="1.1"/>
<path d="M734.94,80.70 L737.24,85.10 L732.64,85.10 Z" fill="none" stroke="#2424c0" stroke-width="1.1"/>
<path d="M757.97,79.00 L760.27,83.40 L755.67,83.40 Z" fill="none" stroke="#2424c0" stroke-width="1.1"/>
<path d="M781.00,77.60 L783.30,82.00 L778.70,82.00 Z" fill="none" stroke="#2424c0" stroke-width="1.1"/>
</svg>

<!-- tooltip -->
<div class="abs" style="left:224px;top:395px;width:44px;height:15px;background:#ffffe1;border:1px solid #555"></div>
<div class="abs" style="left:226.6px;top:398px;font-size:8.7px;color:#111;white-space:nowrap;letter-spacing:-0.2px">8895, 0.23</div>

<!-- legend -->
<div class="leg" style="left:4px;top:507px">Vmax Points = 33</div>
<div class="leg" style="left:4px;top:519px">Well</div>
<svg class="abs" style="left:0;top:515px" width="200" height="14">
  <circle cx="27.5" cy="8.5" r="1.8" fill="none" stroke="#1c1c80" stroke-width="1.2"/>
  <rect x="78.5" y="6.5" width="4" height="4" fill="none" stroke="#1c1c80" stroke-width="1.1"/>
  <path d="M133.7,6.8 L135.9,11 L131.5,11 Z" fill="none" stroke="#1c1c80" stroke-width="1.1"/>
</svg>
<div class="leg" style="left:35.5px;top:519px;color:#2a2a80">E1</div>
<div class="leg" style="left:88.5px;top:519px;color:#2a2a80">E2</div>
<div class="leg" style="left:141px;top:519px;color:#2a2a80">E3</div>
<div class="leg" style="left:4px;top:531px">Vmax</div>
<div class="leg" style="left:57px;top:531px">3.438</div>
<div class="leg" style="left:110px;top:531px">3.529</div>
<div class="leg" style="left:163px;top:531px">3.528</div>
<div class="leg" style="left:4px;top:543px">R^2</div>
<div class="leg" style="left:57px;top:543px">0.890</div>
<div class="leg" style="left:110px;top:543px">0.897</div>
<div class="leg" style="left:163px;top:543px">0.896</div>

<div id="bottom" class="abs">
  <div class="b" style="left:4px;width:44px"></div>
  <div class="abs" style="left:0;top:0;width:1px;height:19px;background:#3a3a3a"></div>
  <div class="abs" style="left:1px;top:0;width:1px;height:19px;background:#e4e4e4"></div>
  <svg class="abs" style="left:8px;top:3.5px" width="14" height="12" viewBox="0 0 14 12">
    <path d="M4,1 L10,1 L10.5,3.5 L3.5,3.5 Z" fill="#9a9a9a" stroke="#222" stroke-width="1"/>
    <path d="M2.5,4 L11.5,4 Q13,4 13,6 L13,8.5 L1,8.5 L1,6 Q1,4 2.5,4 Z" fill="#7a7a7a" stroke="#1a1a1a" stroke-width="1"/>
    <path d="M2.5,8.5 L11.5,8.5 L11,11 L3,11 Z" fill="#aaa" stroke="#1a1a1a" stroke-width="1"/>
    <rect x="2.5" y="5.5" width="5" height="1" fill="#ccc"/>
  </svg>
  <div class="abs" style="left:25.3px;top:5.2px;font-weight:bold;font-size:7.2px;color:#222;letter-spacing:0.3px">Print</div>
  <div class="b" style="left:51px;width:52px"></div>
  <svg class="abs" style="left:54.5px;top:4.5px" width="8" height="9" viewBox="0 0 8 9"><path d="M7,2 L7,1 L1,1 L4,4.5 L1,8 L7,8 L7,7" fill="none" stroke="#e05050" stroke-width="1.2"/></svg>
  <div class="abs" style="left:65.5px;top:4.4px;font-weight:bold;font-size:7.2px;color:#111;letter-spacing:-0.25px">Reduction</div>
  <div class="b" style="left:106px;width:52px"></div>
  <div class="abs" style="left:107.8px;top:4.4px;font-weight:bold;font-size:7.2px;color:#111;letter-spacing:-0.35px">Show Reduced</div>
  <div class="b" style="left:160px;width:53px"></div>
  <div class="abs" style="left:162.8px;top:4.4px;font-weight:bold;font-size:7.2px;color:#111;letter-spacing:-0.1px">ScaleToLimits</div>

  <div class="b" style="left:677px;width:21px"></div>
  <svg class="abs" style="left:677px;top:2px" width="21" height="15"><path d="M5.5,10 L10,8.5 L14.5,5" fill="none" stroke="#5030a0" stroke-width="1.2"/><circle cx="6" cy="9.8" r="1.4" fill="#3a2aa0"/><circle cx="10.2" cy="8.3" r="1.4" fill="#3a2aa0"/><circle cx="14.4" cy="5" r="1.4" fill="#7a40b0"/></svg>
  <div class="b" style="left:701px;width:20px"></div>
  <svg class="abs" style="left:701px;top:2px" width="20" height="15"><path d="M6.3,5 L6.3,9.5 M9.1,5 L9.1,9.5 M12,5 L12,9.5 M14.3,5 L14.3,9.5" stroke="#555" stroke-width="0.9"/><rect x="5.5" y="9.5" width="9.5" height="1.4" fill="#222"/></svg>
  <div class="b" style="left:724px;width:21px"></div>
  <svg class="abs" style="left:724px;top:2px" width="21" height="15"><path d="M6.8,4.5 L6.8,11" stroke="#222" stroke-width="1.3" stroke-dasharray="1.2,0.6"/><path d="M8.5,5 L16,5 M8.5,7.5 L16,7.5 M8.5,10 L16,10" stroke="#555" stroke-width="0.9"/></svg>
  <div class="b" style="left:747px;width:37px"></div>
  <div class="abs" style="left:753.5px;top:3.2px;font-weight:bold;font-size:9.5px;color:#111;letter-spacing:0.3px">Done</div>
</div>
<div id="task" class="abs">
  <div class="abs" style="left:0;top:0;width:73px;height:3px;background:linear-gradient(#2e7e3e 0,#2e7e3e 1px,#52ae5e 1px)"></div>
  <div class="abs" style="left:712px;top:0;width:88px;height:3px;background:linear-gradient(#1070c0 0,#1070c0 1px,#28a8f0 1px)"></div>
</div>
</body></html>
